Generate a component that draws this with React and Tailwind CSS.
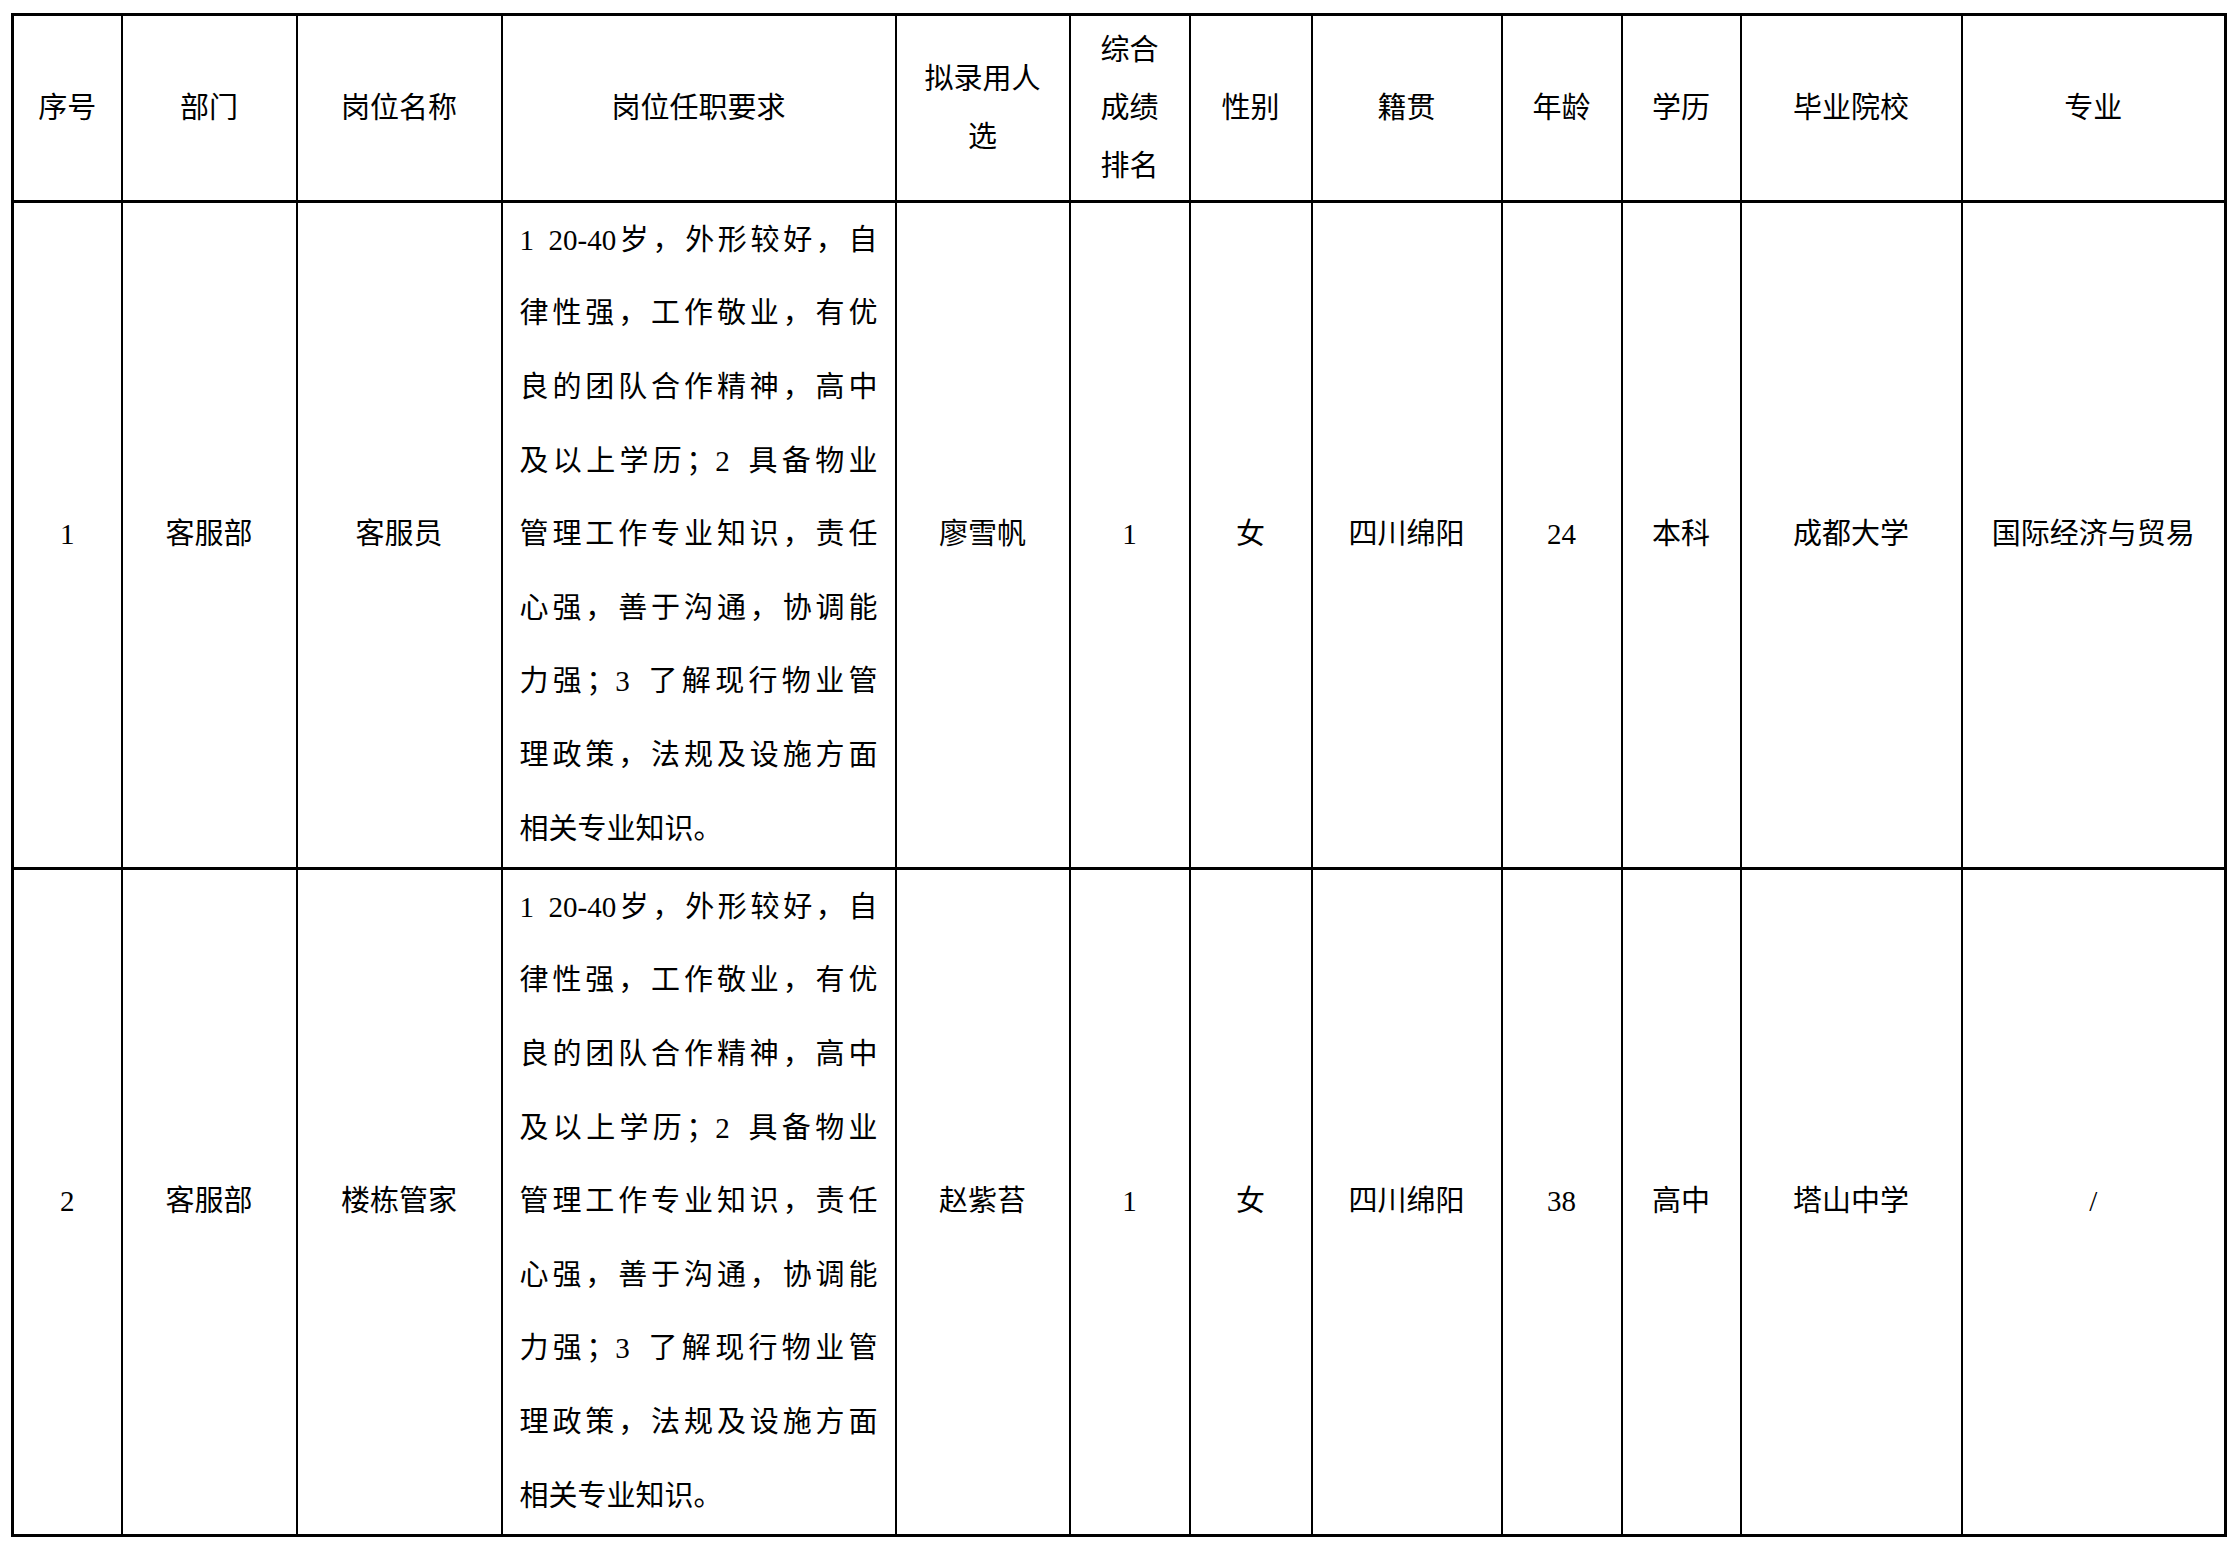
import React from 'react'

var FONT = { fontFamily: '"Liberation Serif", "Noto Sans CJK SC", serif' }

// spaces are half-width (en space) like the source document font
var REQUIREMENT_LINES = [
  '1\u200220-40岁，外形较好，自',
  '律性强，工作敬业，有优',
  '良的团队合作精神，高中',
  '及以上学历；2\u2002具备物业',
  '管理工作专业知识，责任',
  '心强，善于沟通，协调能',
  '力强；3\u2002了解现行物业管',
  '理政策，法规及设施方面',
  '相关专业知识。',
]

var ROWS = [
  { no: '1', dept: '客服部', post: '客服员', name: '廖雪帆', rank: '1', sex: '女', origin: '四川绵阳', age: '24', edu: '本科', school: '成都大学', major: '国际经济与贸易' },
  { no: '2', dept: '客服部', post: '楼栋管家', name: '赵紫苔', rank: '1', sex: '女', origin: '四川绵阳', age: '38', edu: '高中', school: '塔山中学', major: '/' },
]

function Th({ children }) {
  return (
    <th className="border-x-2 border-y-[3px] border-black p-0 text-center align-middle font-normal leading-[58px] text-[29px] text-black">
      {children}
    </th>
  )
}

function Td({ children }) {
  return (
    <td className="border-x-2 border-y-[3px] border-black p-0 text-center align-middle text-[29px] text-black">
      {children}
    </td>
  )
}

export default function App() {
  return (
    <div className="min-h-[1543px] w-[2229px] bg-white pl-[11px] pt-[13px]" style={FONT}>
      <table className="table-fixed border-collapse border-[3px] border-black">
        <colgroup>
          <col className="w-[109px]" />
          <col className="w-[175px]" />
          <col className="w-[205px]" />
          <col className="w-[394px]" />
          <col className="w-[174px]" />
          <col className="w-[120px]" />
          <col className="w-[122px]" />
          <col className="w-[190px]" />
          <col className="w-[120px]" />
          <col className="w-[119px]" />
          <col className="w-[221px]" />
          <col className="w-[264px]" />
        </colgroup>
        <thead>
          <tr className="h-[187px]">
            <Th>序号</Th>
            <Th>部门</Th>
            <Th>岗位名称</Th>
            <Th>岗位任职要求</Th>
            <Th>拟录用人<br />选</Th>
            <Th>综合<br />成绩<br />排名</Th>
            <Th>性别</Th>
            <Th>籍贯</Th>
            <Th>年龄</Th>
            <Th>学历</Th>
            <Th>毕业院校</Th>
            <Th>专业</Th>
          </tr>
        </thead>
        <tbody>
          {ROWS.map(function (r) {
            return (
              <tr key={r.no} className="h-[667px]">
                <Td>{r.no}</Td>
                <Td>{r.dept}</Td>
                <Td>{r.post}</Td>
                <td className="border-x-2 border-y-[3px] border-black px-[17px] py-0 align-middle text-[29px] leading-[73.6px] text-black">
                  {REQUIREMENT_LINES.map(function (line, i) {
                    var last = i === REQUIREMENT_LINES.length - 1
                    return (
                      <div
                        key={i}
                        className={last ? 'text-left' : 'text-justify [text-align-last:justify] [text-justify:inter-character]'}
                      >
                        {line}
                      </div>
                    )
                  })}
                </td>
                <Td>{r.name}</Td>
                <Td>{r.rank}</Td>
                <Td>{r.sex}</Td>
                <Td>{r.origin}</Td>
                <Td>{r.age}</Td>
                <Td>{r.edu}</Td>
                <Td>{r.school}</Td>
                <Td>{r.major}</Td>
              </tr>
            )
          })}
        </tbody>
      </table>
    </div>
  )
}
